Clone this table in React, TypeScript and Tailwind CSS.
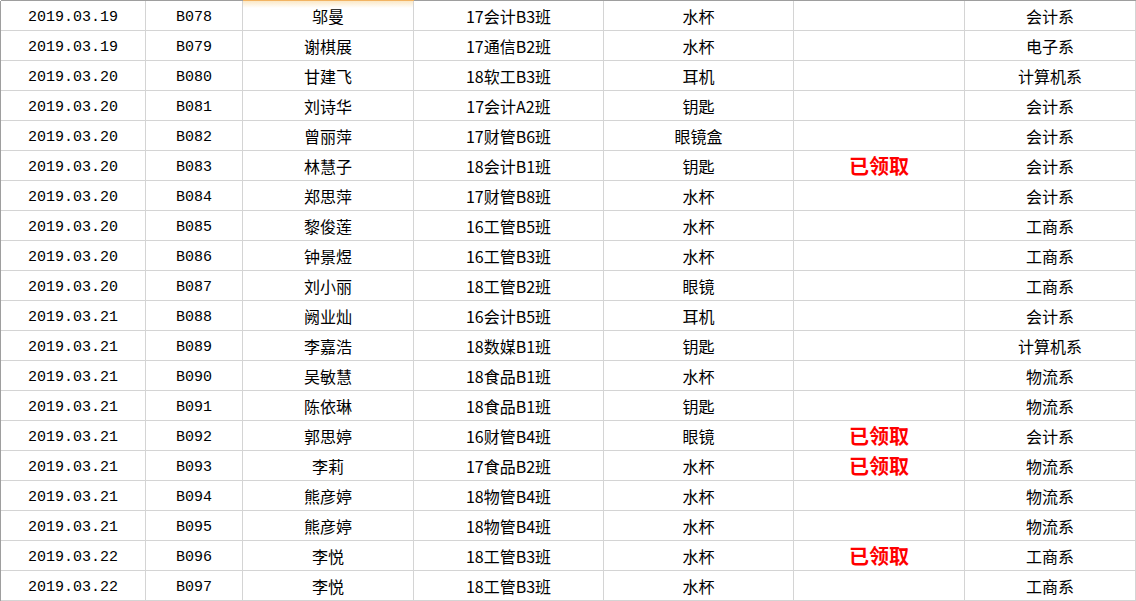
import React from "react";

type Row = [string, string, string, string, string, boolean, string];

const rows: Row[] = [
    ["2019.03.19", "B078", "邬曼", "17会计B3班", "水杯", false, "会计系"],
    ["2019.03.19", "B079", "谢棋展", "17通信B2班", "水杯", false, "电子系"],
    ["2019.03.20", "B080", "甘建飞", "18软工B3班", "耳机", false, "计算机系"],
    ["2019.03.20", "B081", "刘诗华", "17会计A2班", "钥匙", false, "会计系"],
    ["2019.03.20", "B082", "曾丽萍", "17财管B6班", "眼镜盒", false, "会计系"],
    ["2019.03.20", "B083", "林慧子", "18会计B1班", "钥匙", true, "会计系"],
    ["2019.03.20", "B084", "郑思萍", "17财管B8班", "水杯", false, "会计系"],
    ["2019.03.20", "B085", "黎俊莲", "16工管B5班", "水杯", false, "工商系"],
    ["2019.03.20", "B086", "钟景煜", "16工管B3班", "水杯", false, "工商系"],
    ["2019.03.20", "B087", "刘小丽", "18工管B2班", "眼镜", false, "工商系"],
    ["2019.03.21", "B088", "阙业灿", "16会计B5班", "耳机", false, "会计系"],
    ["2019.03.21", "B089", "李嘉浩", "18数媒B1班", "钥匙", false, "计算机系"],
    ["2019.03.21", "B090", "吴敏慧", "18食品B1班", "水杯", false, "物流系"],
    ["2019.03.21", "B091", "陈依琳", "18食品B1班", "钥匙", false, "物流系"],
    ["2019.03.21", "B092", "郭思婷", "16财管B4班", "眼镜", true, "会计系"],
    ["2019.03.21", "B093", "李莉", "17食品B2班", "水杯", true, "物流系"],
    ["2019.03.21", "B094", "熊彦婷", "18物管B4班", "水杯", false, "物流系"],
    ["2019.03.21", "B095", "熊彦婷", "18物管B4班", "水杯", false, "物流系"],
    ["2019.03.22", "B096", "李悦", "18工管B3班", "水杯", true, "工商系"],
    ["2019.03.22", "B097", "李悦", "18工管B3班", "水杯", false, "工商系"],
];

const cols = "grid grid-cols-[145px_97px_171px_190px_190px_171px_171px]";
const cell = "h-[30px] flex items-center justify-center border-r border-b border-[#d4d4d4]";
const mono = "font-['Liberation_Mono','Noto_Sans_CJK_SC',monospace] text-[15px] pt-[5px]";
const cjk = "font-['Noto_Sans_CJK_SC',sans-serif] text-[16px]";

const App = () => {
    return (
        <div className="w-[1136px] h-[601px] bg-white overflow-hidden text-black">
            {/* header edge, column C selected */}
            <div className={`${cols} h-px ml-px`}>
                <div className="bg-[#9e9e9e]" />
                <div className="bg-[#9e9e9e]" />
                <div className="bg-[#f2b463]" />
                <div className="bg-[#9e9e9e]" />
                <div className="bg-[#9e9e9e]" />
                <div className="bg-[#9e9e9e]" />
                <div className="bg-[#9e9e9e]" />
            </div>

            <div className={`${cols} border-l border-[#9e9e9e]`}>
                {rows.map((r, i) => (
                    <React.Fragment key={r[1]}>
                        <div className={`${cell} ${mono}`}>{r[0]}</div>
                        <div className={`${cell} ${mono}`}>{r[1]}</div>
                        <div
                            className={`${cell} ${cjk} ${
                                i === 0 ? "bg-[linear-gradient(to_bottom,#fbe8c6,#ffffff_7px)]" : ""
                            }`}
                        >
                            {r[2]}
                        </div>
                        <div className={`${cell} ${cjk}`}>{r[3]}</div>
                        <div className={`${cell} ${cjk}`}>{r[4]}</div>
                        <div className={`${cell} font-['Noto_Sans_CJK_SC',sans-serif] text-[20px] font-bold text-[#ff0000]`}>
                            {r[5] ? "已领取" : ""}
                        </div>
                        <div className={`${cell} ${cjk}`}>{r[6]}</div>
                    </React.Fragment>
                ))}
            </div>
        </div>
    );
};

export default App;
